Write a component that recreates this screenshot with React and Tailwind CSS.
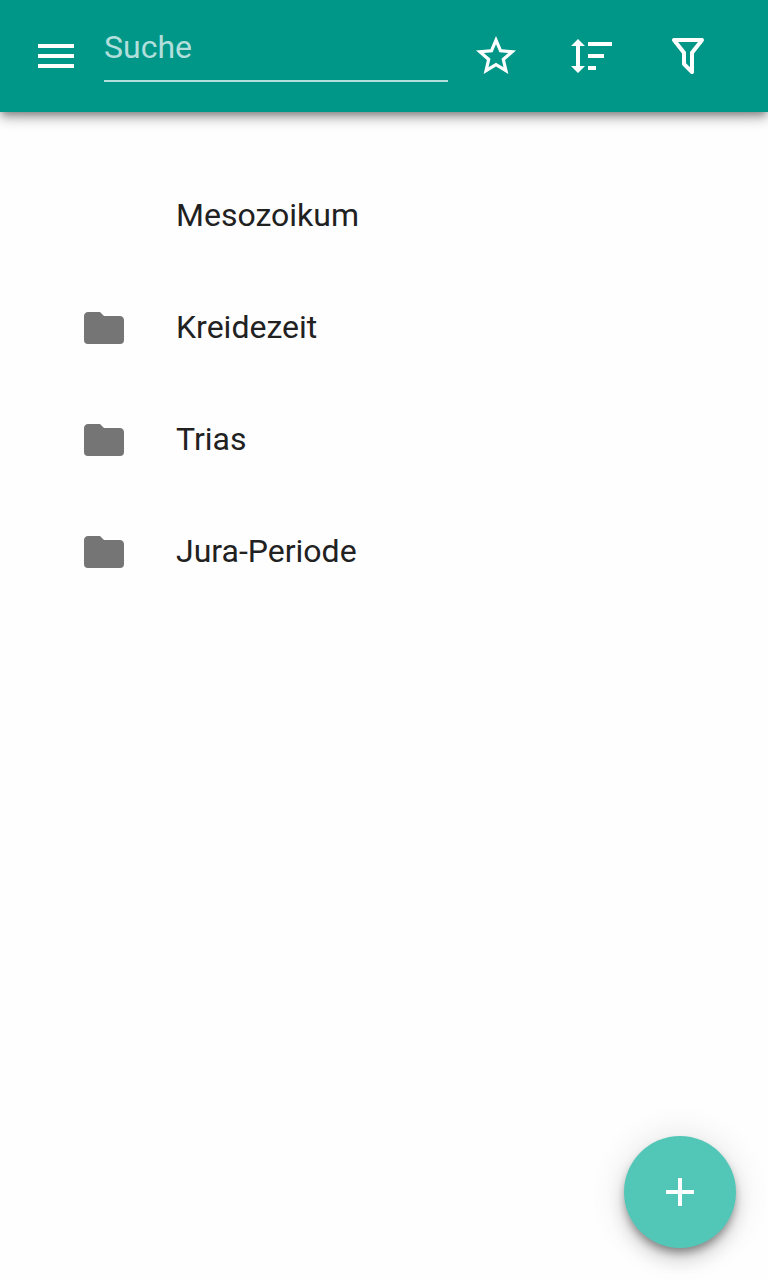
import React, { useState } from "react";

const ICONS = {
  menu: "M3,6H21V8H3V6M3,11H21V13H3V11M3,16H21V18H3V16Z",
  star: "M12,15.39L8.24,17.66L9.23,13.38L5.91,10.5L10.29,10.13L12,6.09L13.71,10.13L18.09,10.5L14.77,13.38L15.76,17.66M22,9.24L14.81,8.63L12,2L9.19,8.63L2,9.24L7.45,13.97L5.82,21L12,17.27L18.18,21L16.54,13.97L22,9.24Z",
  sort: "M10,13V11H18V13H10M10,19V17H14V19H10M10,7V5H22V7H10M6,17H8.5L5,20.5L1.5,17H4V7H1.5L5,3.5L8.5,7H6V17Z",
  filter:
    "M15,19.88C15.04,20.18 14.94,20.5 14.71,20.71C14.32,21.1 13.69,21.1 13.3,20.71L9.29,16.7C9.06,16.47 8.96,16.16 9,15.87V10.75L4.21,4.62C3.87,4.19 3.95,3.56 4.38,3.22C4.57,3.08 4.78,3 5,3V3H19V3C19.22,3 19.43,3.08 19.62,3.22C20.05,3.56 20.13,4.19 19.79,4.62L15,10.75V19.88M7.04,5L11,10.06V15.58L13,17.58V10.05L16.96,5H7.04Z",
  folder:
    "M10,4H4C2.89,4 2,4.89 2,6V18A2,2 0 0,0 4,20H20A2,2 0 0,0 22,18V8C22,6.89 21.1,6 20,6H12L10,4Z",
  plus: "M19,13H13V19H11V13H5V11H11V5H13V11H19V13Z",
};

const Icon = ({ name, className = "" }) => (
  <svg viewBox="0 0 24 24" fill="currentColor" className={`size-12 shrink-0 ${className}`}>
    <path d={ICONS[name]} />
  </svg>
);

const IconButton = ({ icon, label }) => (
  <button aria-label={label} className="flex size-24 shrink-0 items-center justify-center">
    <Icon name={icon} />
  </button>
);

const items = [
  { title: "Mesozoikum" },
  { title: "Kreidezeit", icon: "folder" },
  { title: "Trias", icon: "folder" },
  { title: "Jura-Periode", icon: "folder" },
];

export default function App() {
  const [search, setSearch] = useState("");

  return (
    <div className="flex min-h-screen flex-col bg-[#fefefe] font-[Roboto,sans-serif] text-[32px] text-[#212121]">
      <header className="flex h-28 items-center bg-[#009788] pl-2 pr-8 text-white shadow-[0_4px_8px_-2px_rgba(0,0,0,0.4),0_8px_10px_rgba(0,0,0,0.14),0_2px_20px_rgba(0,0,0,0.12)]">
        <IconButton icon="menu" label="Menü" />
        <input
          value={search}
          onChange={(e) => setSearch(e.target.value)}
          placeholder="Suche"
          className="mb-0.5 h-[54px] w-[344px] border-b-2 border-[#b2dfdb] bg-transparent pb-3.5 leading-10 outline-none placeholder:text-[#b2dfdb]"
        />
        <IconButton icon="star" label="Favoriten" />
        <IconButton icon="sort" label="Sortieren" />
        <IconButton icon="filter" label="Filter" />
      </header>

      <main className="pt-12">
        <ul>
          {items.map(({ title, icon }) => (
            <li key={title} className="flex h-28 items-center pl-20">
              <div className="w-24">{icon && <Icon name={icon} className="text-[#757575]" />}</div>
              <span className="pb-0.5 leading-10">{title}</span>
            </li>
          ))}
        </ul>
      </main>

      {/* floating add button */}
      <button
        aria-label="Hinzufügen"
        className="fixed bottom-8 right-8 flex size-28 items-center justify-center rounded-full bg-[#52c7b8] text-white shadow-[0_6px_10px_-2px_rgba(0,0,0,0.4),0_12px_20px_rgba(0,0,0,0.14),0_2px_36px_rgba(0,0,0,0.12)]"
      >
        <Icon name="plus" />
      </button>
    </div>
  );
}
